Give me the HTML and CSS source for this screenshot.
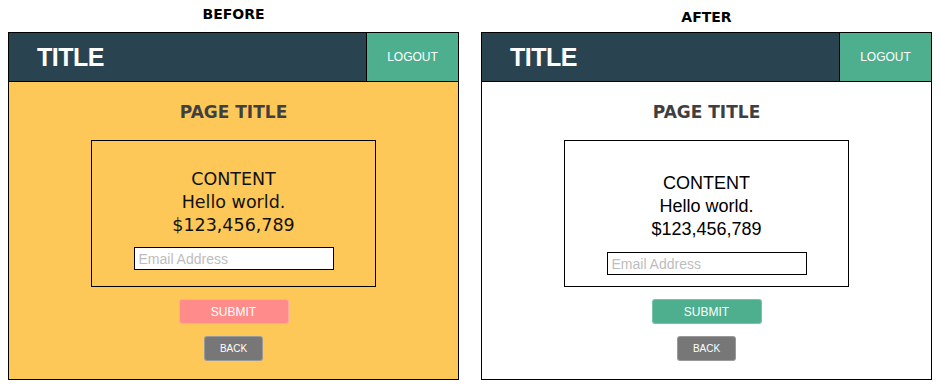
FILE: index.html
```html
<!DOCTYPE html>
<html lang="en">
<head>
    <meta charset="UTF-8">
    <meta name="viewport" content="width=device-width, initial-scale=1.0">
    <title>Before / After</title>
    <link rel="stylesheet" href="styles.css">
</head>

<body>
    <div class="compare">
        <div class="column">
            <h2 class="label">BEFORE</h2>
            <div class="panel panel-before">
                <header class="topbar">
                    <h1 class="brand">TITLE</h1>
                    <a class="logout" href="#">LOGOUT</a>
                </header>
                <main class="page">
                    <h3 class="page-title">PAGE TITLE</h3>
                    <div class="content-box">
                        <p class="content-text">CONTENT<br>Hello world.<br>$123,456,789</p>
                        <input type="text" class="email" placeholder="Email Address">
                    </div>
                    <button class="submit-btn">SUBMIT</button>
                    <button class="back-btn">BACK</button>
                </main>
            </div>
        </div>

        <div class="column">
            <h2 class="label label-after">AFTER</h2>
            <div class="panel panel-after">
                <header class="topbar">
                    <h1 class="brand">TITLE</h1>
                    <a class="logout" href="#">LOGOUT</a>
                </header>
                <main class="page">
                    <h3 class="page-title">PAGE TITLE</h3>
                    <div class="content-box">
                        <p class="content-text">CONTENT<br>Hello world.<br>$123,456,789</p>
                        <input type="text" class="email" placeholder="Email Address">
                    </div>
                    <button class="submit-btn">SUBMIT</button>
                    <button class="back-btn">BACK</button>
                </main>
            </div>
        </div>
    </div>
</body>
</html>
```

FILE: styles.css
```css
body {
    margin: 0;
    padding: 0;
    background: #fff;
    font-family: "Liberation Sans", Arial, sans-serif;
}

.compare {
    display: flex;
    gap: 22px;
    padding-left: 8px;
}

.column {
    display: flex;
    flex-direction: column;
    align-items: center;
    width: 451px;
    padding-top: 6px;
}

.label {
    margin: 0 0 10px 0;
    height: 16px;
    font-family: "DejaVu Sans", sans-serif;
    font-size: 14px;
    line-height: 16px;
    font-weight: bold;
    color: #000;
}

.label-after {
    margin-top: 3px;
    margin-bottom: 7px;
}

.panel {
    width: 451px;
    height: 348px;
    box-sizing: border-box;
    border: 1px solid #000;
    display: flex;
    flex-direction: column;
}

.topbar {
    display: flex;
    height: 49px;
    box-sizing: border-box;
    border-bottom: 1px solid #000;
    background-color: #2a4350;
}

.brand {
    flex: 1;
    margin: 0;
    padding-left: 28px;
    display: flex;
    align-items: center;
    color: #fff;
    font-size: 25px;
    letter-spacing: -0.5px;
    font-weight: bold;
}

.logout {
    width: 92px;
    box-sizing: border-box;
    border-left: 1px solid #000;
    background-color: #4daf8e;
    color: #fff;
    font-size: 12px;
    text-decoration: none;
    display: flex;
    align-items: center;
    justify-content: center;
}

.page {
    flex: 1;
    display: flex;
    flex-direction: column;
    align-items: center;
    padding-top: 20px;
}

.panel-before .page {
    background-color: #fdc857;
}

.page-title {
    margin: 0 0 18px 0;
    font-family: "DejaVu Sans", sans-serif;
    font-size: 17px;
    line-height: 20px;
    font-weight: bold;
    color: #3f3f42;
}

.content-box {
    width: 285px;
    height: 147px;
    box-sizing: border-box;
    border: 1px solid #000;
    display: flex;
    flex-direction: column;
    align-items: center;
    padding-top: 27px;
}

.content-text {
    margin: 0 0 10px 0;
    text-align: center;
    line-height: 23px;
    color: #111;
}

.panel-before .content-text {
    font-family: "DejaVu Sans", sans-serif;
    font-size: 17.5px;
}

.panel-after .content-box {
    padding-top: 31px;
}

.panel-after .content-text {
    font-size: 18px;
    margin-bottom: 11px;
    color: #000;
}

.email {
    width: 200px;
    height: 23px;
    box-sizing: border-box;
    border: 1px solid #000;
    border-radius: 0;
    padding: 0 4px;
    font-family: "Liberation Sans", Arial, sans-serif;
    font-size: 14px;
    background: #fff;
    outline: none;
}

.email::placeholder {
    color: #bdbdbd;
}

.submit-btn, .back-btn {
    height: 25px;
    border: 1px solid rgba(255, 255, 255, 0.25);
    border-radius: 3px;
    color: #fff;
    font-family: "Liberation Sans", Arial, sans-serif;
    cursor: pointer;
    padding: 0;
}

.submit-btn {
    width: 110px;
    margin-top: 12px;
    font-size: 12px;
    background-color: #4daf8e;
}

.panel-before .submit-btn {
    background-color: #ff8c8a;
}

.back-btn {
    width: 59px;
    margin-top: 12px;
    font-size: 10px;
    background-color: #777;
}
```
